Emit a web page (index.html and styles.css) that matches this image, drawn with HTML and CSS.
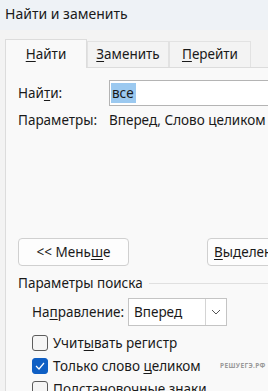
FILE: index.html
```html
<!DOCTYPE html>
<html lang="ru">
<head>
    <meta charset="UTF-8">
    <meta name="viewport" content="width=device-width, initial-scale=1.0">
    <title>Найти и заменить</title>
    <link rel="stylesheet" href="styles.css">
</head>
<body>
    <div class="titlebar">Найти и заменить</div>
    <div class="dialog">
        <div class="tabs">
            <div class="tab active"><u>Н</u>айти</div>
            <div class="tab"><u>З</u>аменить</div>
            <div class="tab"><u>П</u>ерейти</div>
        </div>
        <div class="panel">
            <div class="find-row">
                <div class="label">Най<u>т</u>и:</div>
                <div class="input"><span class="selected">все</span></div>
            </div>
            <div class="params-row">
                <div class="label">Параметры:</div>
                <div>Вперед, Слово целиком</div>
            </div>
            <div class="buttons">
                <div class="btn">&lt;&lt; Мень<u>ш</u>е</div>
                <div class="btn wide"><u>В</u>ыделение в</div>
            </div>
            <div class="group-title"><span>Параметры поиска</span></div>
            <div class="group">
                <div class="direction-row">
                    <div class="dir-label">На<u>п</u>равление:</div>
                    <div class="select">
                        <span class="select-value">Вперед</span>
                        <span class="select-arrow">
                            <svg width="10" height="6" viewBox="0 0 10 6"><path d="M1 1 L5 5 L9 1" fill="none" stroke="#555" stroke-width="1"/></svg>
                        </span>
                    </div>
                </div>
                <div class="check-row">
                    <span class="checkbox"></span>
                    <span>Учит<u>ы</u>вать регистр</span>
                </div>
                <div class="check-row">
                    <span class="checkbox checked">
                        <svg width="10" height="8" viewBox="0 0 10 8"><path d="M1 4 L4 7 L9 1" fill="none" stroke="#fff" stroke-width="1.2"/></svg>
                    </span>
                    <span>Только слово <u>ц</u>еликом</span>
                </div>
                <div class="check-row">
                    <span class="checkbox"></span>
                    <span>Подстановочные знаки</span>
                </div>
            </div>
        </div>
    </div>
    <div class="watermark">РЕШУЕГЭ.РФ</div>
</body>
</html>
```

FILE: styles.css
```css
body {
    margin: 0;
    width: 268px;
    height: 391px;
    overflow: hidden;
    position: relative;
    background-color: #f3f3f3;
    font-family: "Noto Sans", sans-serif;
    font-size: 13.5px;
    color: #1a1a1a;
}
u {
    text-decoration-thickness: 1px;
    text-underline-offset: 2px;
}
.titlebar {
    height: 30px;
    line-height: 28px;
    padding-left: 5px;
    background-color: #eef2f6;
    font-size: 14px;
}
.dialog {
    width: 420px;
    padding: 10px 0 0 5px;
}
.tabs {
    display: flex;
    align-items: flex-end;
    height: 27px;
}
.tab {
    width: 80px;
    height: 25px;
    line-height: 24px;
    text-align: center;
    border: 1px solid #e2e2e2;
    border-bottom: none;
    background-color: #f3f3f3;
}
.tab.active {
    height: 28px;
    line-height: 28px;
    background-color: #f9f9f9;
    border-color: #dcdcdc;
    position: relative;
    z-index: 1;
    margin-bottom: -1px;
}
.panel {
    height: 400px;
    border: 1px solid #dcdcdc;
    background-color: #f9f9f9;
    padding: 12px 0 0 12px;
}
.find-row {
    display: flex;
    align-items: center;
}
.label {
    width: 91px;
}
.input {
    flex: 1;
    height: 24px;
    border: 1px solid #b4b4b4;
    background-color: #fff;
    padding: 0 0 0 1px;
    display: flex;
    align-items: center;
}
.selected {
    background-color: #9bc9f0;
    padding: 0 2px 0 1px;
    line-height: 20px;
}
.params-row {
    display: flex;
    margin-top: 4px;
    line-height: 20px;
}
.buttons {
    display: flex;
    gap: 78px;
    margin-top: 108px;
}
.btn {
    width: 109px;
    height: 26px;
    line-height: 26px;
    text-align: center;
    border: 1px solid #d0d0d0;
    border-radius: 4px;
    background-color: #fdfdfd;
}
.btn.wide {
    width: 140px;
    text-align: left;
    padding-left: 6px;
}
.group-title {
    display: flex;
    align-items: center;
    margin-top: 7px;
    line-height: 20px;
}
.group-title::after {
    content: "";
    flex: 1;
    height: 1px;
    background-color: #e0e0e0;
    margin-left: 6px;
}
.group {
    padding-left: 14px;
}
.direction-row {
    display: flex;
    align-items: center;
    margin-top: 5px;
}
.dir-label {
    width: 96px;
}
.select {
    display: flex;
    width: 97px;
    height: 26px;
    border: 1px solid #c4c4c4;
    background-color: #fff;
}
.select-value {
    flex: 1;
    line-height: 26px;
    padding-left: 5px;
}
.select-arrow {
    width: 20px;
    border-left: 1px solid #d4d4d4;
    display: flex;
    align-items: center;
    justify-content: center;
}
.check-row {
    display: flex;
    align-items: center;
    height: 23px;
    gap: 5px;
}
.direction-row + .check-row {
    margin-top: 5px;
}
.checkbox {
    width: 14px;
    height: 14px;
    border: 1px solid #5c5c5c;
    border-radius: 3px;
    background-color: #f5f5f5;
    display: flex;
    align-items: center;
    justify-content: center;
}
.checkbox.checked {
    background-color: #0f5fc4;
    border-color: #0f5fc4;
}
.watermark {
    position: absolute;
    left: 220px;
    top: 361px;
    font-size: 6.5px;
    font-weight: bold;
    letter-spacing: 0.4px;
    color: #9a9a9a;
}
```
